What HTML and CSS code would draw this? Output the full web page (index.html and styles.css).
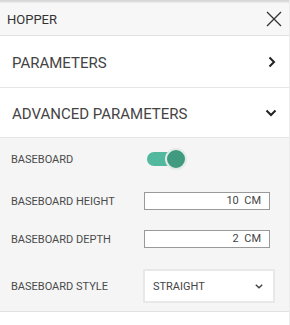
FILE: index.html
```html
<!DOCTYPE html>
<html lang="en">
<head>
  <meta charset="UTF-8">
  <title>Hopper</title>
  <link rel="stylesheet" href="styles.css">
</head>
<body>
  <div class="panel">
    <div class="panel-header">
      <span class="panel-title">HOPPER</span>
      <svg class="close-icon" width="16" height="16" viewBox="0 0 16 16">
        <path d="M1 1 L15 15 M15 1 L1 15" stroke="#333" stroke-width="1.3" fill="none"/>
      </svg>
    </div>

    <div class="section-row">
      <span class="section-title">PARAMETERS</span>
      <svg class="chevron" width="10" height="12" viewBox="0 0 10 12">
        <path d="M2.5 1.5 L7 6 L2.5 10.5" stroke="#222" stroke-width="2" fill="none"/>
      </svg>
    </div>

    <div class="section-row section-open">
      <span class="section-title">ADVANCED PARAMETERS</span>
      <svg class="chevron" width="12" height="8" viewBox="0 0 12 8">
        <path d="M1.5 1.5 L6 6 L10.5 1.5" stroke="#222" stroke-width="2" fill="none"/>
      </svg>
    </div>

    <div class="section-body">
      <div class="field field-toggle">
        <label class="field-label">BASEBOARD</label>
        <div class="toggle">
          <span class="toggle-track"></span>
          <span class="toggle-knob"></span>
        </div>
      </div>
      <div class="field">
        <label class="field-label">BASEBOARD HEIGHT</label>
        <div class="text-input">10&nbsp;&nbsp;CM</div>
      </div>
      <div class="field">
        <label class="field-label">BASEBOARD DEPTH</label>
        <div class="text-input">2&nbsp;&nbsp;CM</div>
      </div>
      <div class="field field-select">
        <label class="field-label">BASEBOARD STYLE</label>
        <div class="select">
          <span>STRAIGHT</span>
          <svg width="10" height="7" viewBox="0 0 10 7">
            <path d="M1.8 1.8 L5 4.8 L8.2 1.8" stroke="#444" stroke-width="1.5" fill="none"/>
          </svg>
        </div>
      </div>
    </div>
  </div>
</body>
</html>
```

FILE: styles.css
```css
body {
  margin: 0;
  font-family: Roboto, 'Liberation Sans', sans-serif;
  background-color: #FFFFFF;
  color: #333;
}
.panel {
  width: 289px;
  min-height: 322px;
  padding-top: 3px;
  border-right: 1px solid #ececec;
  background: linear-gradient(to bottom, #d2d2d2 0, #ececec 3px, #FFFFFF 3px);
}
.panel-header {
  height: 32px;
  background-color: #f7f7f7;
  border-bottom: 1px solid #e2e2e2;
  display: flex;
  align-items: center;
  justify-content: space-between;
  padding: 0 7px 0 7px;
}
.panel-title {
  font-size: 13px;
  color: #333;
  padding-top: 1px;
}
.close-icon {
  margin-top: -1px;
}
.section-row {
  height: 51px;
  border-bottom: 1px solid #e6e6e6;
  display: flex;
  align-items: center;
  justify-content: space-between;
  padding: 0 12px 0 12px;
}
.section-open {
  height: 49px;
}
.section-title {
  font-size: 15px;
  color: #444;
  padding-top: 3px;
}
.section-body {
  background-color: #f5f5f5;
  border-bottom: 1px solid #e2e2e2;
  padding: 8px 0 8px 11px;
  display: flex;
  flex-direction: column;
  gap: 20px;
}
.field {
  display: flex;
  align-items: center;
}
.field-toggle {
  height: 26px;
}
.field-select {
  margin-top: 1px;
}
.field-label {
  width: 133px;
  font-size: 11px;
  color: #4a4a4a;
}
.toggle {
  position: relative;
  width: 42px;
  height: 24px;
}
.toggle-track {
  position: absolute;
  left: 3px;
  top: 5px;
  width: 30px;
  height: 14px;
  border-radius: 7px;
  background-color: #52b89e;
}
.toggle-knob {
  position: absolute;
  left: 21px;
  top: 1px;
  width: 18px;
  height: 18px;
  border-radius: 50%;
  background-color: #3f9a80;
  border: 2px solid #e3ebe7;
}
.text-input {
  width: 116px;
  height: 16px;
  border: 1px solid #9a9a9a;
  background-color: #FFFFFF;
  font-size: 11px;
  color: #444;
  text-align: right;
  line-height: 16px;
  padding: 0 8px 0 0;
}
.select {
  width: 111px;
  height: 30px;
  margin-left: -1px;
  border: 2px solid #e8e8e8;
  background-color: #FFFFFF;
  display: flex;
  align-items: center;
  justify-content: space-between;
  padding: 0 9px 0 8px;
  font-size: 11px;
  color: #444;
}
```
